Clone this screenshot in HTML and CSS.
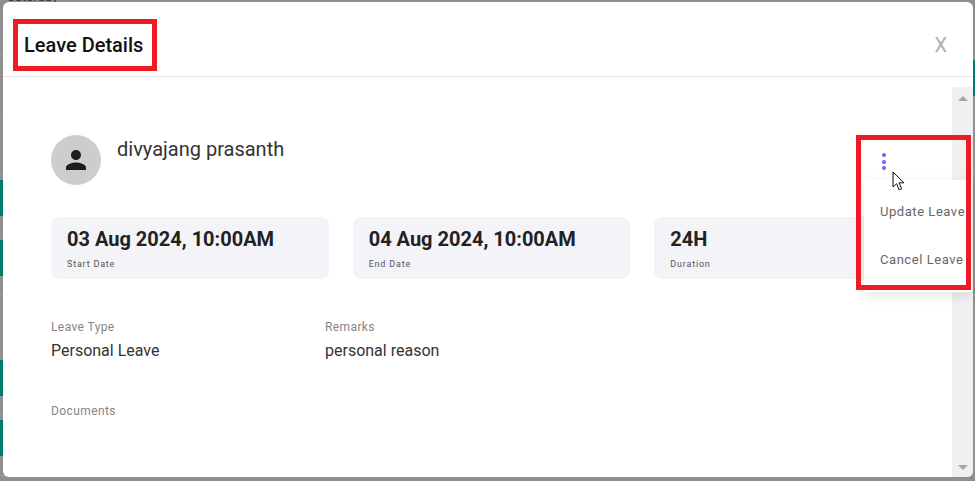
FILE: index.html
```html
<!DOCTYPE html>
<html lang="en">
<head>
<meta charset="utf-8">
<title>Leave Details</title>
<link rel="stylesheet" href="styles.css">
</head>
<body>
<div class="backdrop" aria-hidden="true">
  <span class="bg-day">Saturday</span>
  <span class="strip strip-l1"></span>
  <span class="strip strip-l2"></span>
  <span class="strip strip-l3"></span>
  <span class="strip strip-l4"></span>
  <span class="strip strip-r1"></span>
</div>
<main class="modal">
  <header class="modal-header">
    <h1 class="modal-title">Leave Details</h1>
    <span class="modal-close">X</span>
  </header>
  <div class="modal-scroll">
    <div class="modal-body">
      <section class="profile">
        <div class="avatar">
          <svg viewBox="0 0 24 24" width="30" height="30"><path fill="#1c1c1c" d="M12 12c2.21 0 4-1.79 4-4s-1.79-4-4-4-4 1.79-4 4 1.79 4 4 4zm0 2c-2.67 0-8 1.34-8 4v2h16v-2c0-2.66-5.33-4-8-4z"/></svg>
        </div>
        <div class="profile-name">divyajang prasanth</div>
        <div class="kebab"><i></i><i></i><i></i></div>
      </section>
      <section class="cards">
        <div class="card"><div class="card-value">03 Aug 2024, 10:00AM</div><div class="card-label">Start Date</div></div>
        <div class="card"><div class="card-value">04 Aug 2024, 10:00AM</div><div class="card-label">End Date</div></div>
        <div class="card"><div class="card-value">24H</div><div class="card-label">Duration</div></div>
      </section>
      <section class="details">
        <div class="field"><div class="field-label">Leave Type</div><div class="field-value">Personal Leave</div></div>
        <div class="field"><div class="field-label">Remarks</div><div class="field-value">personal reason</div></div>
      </section>
      <div class="field-label documents">Documents</div>
    </div>
    <div class="scrollbar">
      <span class="arrow-up"></span>
      <span class="arrow-down"></span>
    </div>
  </div>
</main>
<div class="menu">
  <div class="menu-item">Update Leave</div>
  <div class="menu-item">Cancel Leave</div>
</div>
<div class="mark mark-title"></div>
<div class="mark mark-menu"></div>
<svg class="cursor" viewBox="0 0 14 21" width="14" height="21"><path fill="#fff" stroke="#111" stroke-width="1" stroke-linejoin="round" d="M1 1v15l3.6-3.3 2.5 6.2 2.6-1.1-2.6-6h4.9z"/></svg>
</body>
</html>
```
FILE: styles.css
```css
* { box-sizing: border-box; }
html, body { height: 100%; }
body {
  margin: 0;
  width: 975px;
  height: 481px;
  overflow: hidden;
  position: relative;
  padding: 2px 2px 4px 3px;
  background: #8f8f8f;
  font-family: Roboto, "Liberation Sans", sans-serif;
  display: flex;
}
.backdrop {
  position: absolute;
  inset: 0;
  background: repeating-linear-gradient(to bottom, transparent 0 55px, #9c9c9c 55px 56px, transparent 56px 60px);
}
.bg-day {
  position: absolute;
  left: 7px;
  top: -11px;
  font-size: 13px;
  color: #333;
}
.strip { position: absolute; height: 36px; width: 3px; background: #007a6c; }
.strip-l1 { left: 0; top: 180px; }
.strip-l2 { left: 0; top: 240px; }
.strip-l3 { left: 0; top: 360px; }
.strip-l4 { left: 0; top: 420px; }
.strip-r1 { right: 0; top: 60px; }
.modal {
  position: relative;
  flex: 1;
  display: flex;
  flex-direction: column;
  background: #fff;
  border-radius: 6px;
  overflow: hidden;
}
.modal-header {
  height: 75px;
  flex: none;
  display: flex;
  align-items: center;
  justify-content: space-between;
  padding: 12px 26px 0 21px;
  border-bottom: 1px solid #e4e4e4;
}
.modal-title {
  margin: 0;
  font-size: 20px;
  font-weight: 500;
  color: #111;
}
.modal-close {
  font-size: 20px;
  color: #aeaeae;
}
.modal-scroll {
  flex: 1;
  display: flex;
  min-height: 0;
  padding-top: 10px;
}
.modal-body {
  flex: 1;
  padding: 48px 20px 0 48px;
  min-width: 0;
}
.scrollbar {
  width: 21px;
  flex: none;
  background: #f0f0f0;
  display: flex;
  flex-direction: column;
  justify-content: space-between;
  align-items: center;
  padding: 9px 0 7px;
}
.arrow-up, .arrow-down {
  width: 0;
  height: 0;
  border-left: 5px solid transparent;
  border-right: 5px solid transparent;
}
.arrow-up { border-bottom: 5px solid #a3a3a3; }
.arrow-down { border-top: 5px solid #a3a3a3; }
.profile {
  display: flex;
  height: 50px;
  position: relative;
}
.avatar {
  width: 50px;
  height: 50px;
  border-radius: 50%;
  background: #cdcdcd;
  display: flex;
  align-items: center;
  justify-content: center;
  flex: none;
}
.profile-name {
  margin-left: 16px;
  font-size: 20px;
  line-height: 29px;
  color: #333;
}
.kebab {
  position: absolute;
  left: 831px;
  top: 18px;
  display: flex;
  flex-direction: column;
  gap: 2.5px;
}
.kebab i {
  display: block;
  width: 4px;
  height: 4px;
  border-radius: 50%;
  background: #6464ff;
}
.cards {
  margin-top: 32px;
  display: flex;
  gap: 24px;
}
.card {
  flex: 1;
  height: 62px;
  padding: 10px 16px;
  background: #f3f3f8;
  border-radius: 8px;
}
.card-value {
  font-size: 20px;
  font-weight: 700;
  line-height: 25px;
  color: #222;
}
.card-label {
  margin-top: 6px;
  font-size: 9px;
  line-height: 12px;
  letter-spacing: 0.8px;
  color: #555;
}
.details {
  margin-top: 41px;
  display: flex;
}
.field { width: 274px; }
.field-label {
  font-size: 12px;
  line-height: 14px;
  letter-spacing: 0.4px;
  color: #858585;
}
.field-value {
  margin-top: 7px;
  font-size: 16px;
  line-height: 20px;
  color: #333;
}
.documents { margin-top: 43px; }
.menu {
  position: absolute;
  left: 864px;
  top: 180px;
  width: 108px;
  height: 112px;
  background: #fff;
  box-shadow: 0 4px 12px rgba(0, 0, 0, 0.1);
  padding: 20px 0 0 16px;
}
.menu-item {
  font-size: 13px;
  line-height: 24px;
  height: 48px;
  letter-spacing: 0.55px;
  color: #666;
  white-space: nowrap;
}
.mark {
  position: absolute;
  border: 5px solid #ed1c24;
}
.mark-title { left: 13px; top: 19px; width: 144px; height: 52px; }
.mark-menu { left: 856px; top: 135px; width: 115px; height: 155px; }
.cursor { position: absolute; left: 892px; top: 171px; }
```
